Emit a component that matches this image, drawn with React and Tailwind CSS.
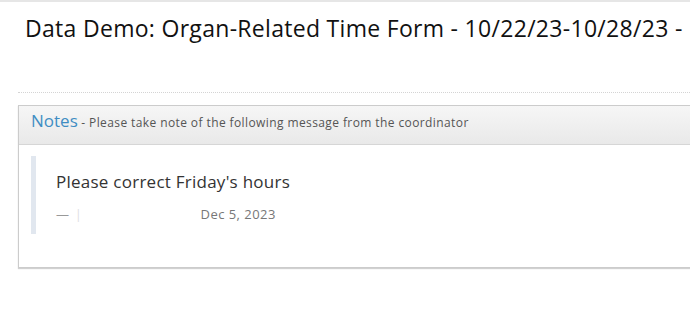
export default function App() {
  const font = { fontFamily: '"Open Sans", "Liberation Sans", sans-serif' };
  return (
    <div className="w-[690px] h-[320px] overflow-hidden bg-white border-t-2 border-[#e6e6e6]" style={font}>
      <div className="w-[780px]">
        <h1 className="mt-[11px] pl-[25px] text-[23px] tracking-[0.3px] leading-[30px] text-[#111] whitespace-nowrap font-normal">
          Data Demo: Organ-Related Time Form - 10/22/23-10/28/23 -
        </h1>
        <div className="ml-[18px] mt-[49px] border-b border-dotted border-[#d4d4d4]"></div>
        <div className="ml-[18px] mt-[12px] border border-[#cccccc] shadow-[0_1px_1px_rgba(0,0,0,0.18)] bg-white">
          <div className="h-[39px] pl-[12px] bg-gradient-to-b from-[#f6f6f6] to-[#e9e9e9] border-b border-[#d6d6d6] whitespace-nowrap leading-[30px]">
            <span className="text-[17px] text-[#3f8dc3]">Notes</span>
            <span className="text-[12px] tracking-[0.4px] text-[#555]"> - Please take note of the following message from the coordinator</span>
          </div>
          <div className="pt-[11px] pb-[13px] pl-[12px]">
            <div className="border-l-[5px] border-[#e1e7ef] pl-[20px] pt-[14px] pb-[10px] mb-[20px]">
              <p className="text-[17px] tracking-[0.25px] leading-[23px] text-[#333]">Please correct Friday's hours</p>
              <div className="mt-[12px] text-[13px] leading-[19px] text-[#777] flex items-baseline whitespace-nowrap">
                <span className="text-[#999]">—</span>
                <span className="ml-[6px] text-[#ddd] text-[12px]">|</span>
                <span className="ml-[119px] tracking-[0.45px]">Dec 5, 2023</span>
              </div>
            </div>
          </div>
        </div>
      </div>
    </div>
  );
}
